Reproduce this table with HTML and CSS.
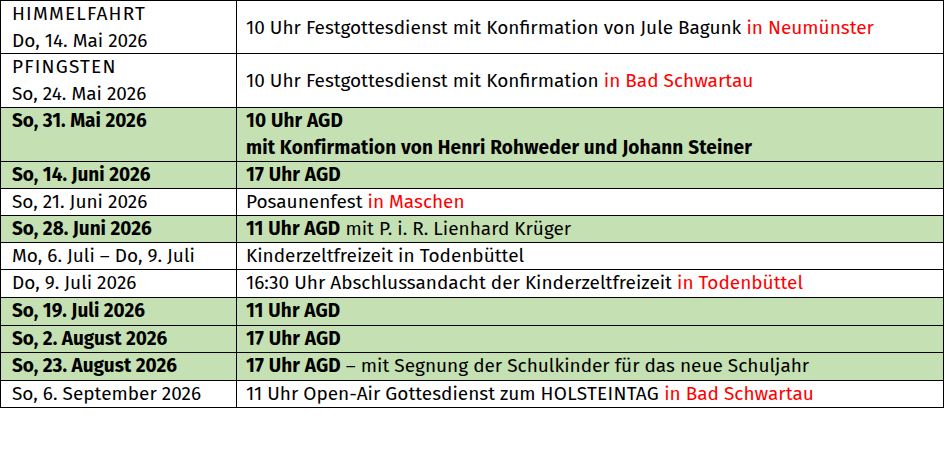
FILE: index.html
```html
<!DOCTYPE html>
<html lang="de">
<head>
<meta charset="utf-8">
<title>Termine</title>
<link rel="stylesheet" href="styles.css">
</head>
<body>
<div class="table">
  <div class="row h53">
    <div class="cell date"><span class="caps">HIMMELFAHRT</span><br>Do, 14. Mai 2026</div>
    <div class="cell event mid">10 Uhr Festgottesdienst mit Konfirmation von Jule Bagunk <span class="red">in Neumünster</span></div>
  </div>
  <div class="row h54">
    <div class="cell date"><span class="caps">PFINGSTEN</span><br>So, 24. Mai 2026</div>
    <div class="cell event mid">10 Uhr Festgottesdienst mit Konfirmation <span class="red">in Bad Schwartau</span></div>
  </div>
  <div class="row h54 green">
    <div class="cell date b">So, 31. Mai 2026</div>
    <div class="cell event b">10 Uhr AGD<br>mit Konfirmation von Henri Rohweder und Johann Steiner</div>
  </div>
  <div class="row h27 green">
    <div class="cell date b">So, 14. Juni 2026</div>
    <div class="cell event b">17 Uhr AGD</div>
  </div>
  <div class="row h27">
    <div class="cell date">So, 21. Juni 2026</div>
    <div class="cell event">Posaunenfest <span class="red">in Maschen</span></div>
  </div>
  <div class="row h27 green">
    <div class="cell date b">So, 28. Juni 2026</div>
    <div class="cell event"><span class="b">11 Uhr AGD</span> mit P. i. R. Lienhard Krüger</div>
  </div>
  <div class="row h27">
    <div class="cell date">Mo, 6. Juli – Do, 9. Juli</div>
    <div class="cell event">Kinderzeltfreizeit in Todenbüttel</div>
  </div>
  <div class="row h28">
    <div class="cell date">Do, 9. Juli 2026</div>
    <div class="cell event">16:30 Uhr Abschlussandacht der Kinderzeltfreizeit <span class="red">in Todenbüttel</span></div>
  </div>
  <div class="row h28 green">
    <div class="cell date b">So, 19. Juli 2026</div>
    <div class="cell event b">11 Uhr AGD</div>
  </div>
  <div class="row h27 green">
    <div class="cell date b">So, 2. August 2026</div>
    <div class="cell event b">17 Uhr AGD</div>
  </div>
  <div class="row h28 green">
    <div class="cell date b">So, 23. August 2026</div>
    <div class="cell event"><span class="b">17 Uhr AGD</span> – mit Segnung der Schulkinder für das neue Schuljahr</div>
  </div>
  <div class="row h27">
    <div class="cell date">So, 6. September 2026</div>
    <div class="cell event">11 Uhr Open-Air Gottesdienst zum <span class="caps-sm">HOLSTEINTAG</span> <span class="red">in Bad Schwartau</span></div>
  </div>
</div>
</body>
</html>
```
FILE: styles.css
```css
html, body {
  margin: 0;
  padding: 0;
  background: #ffffff;
}
body {
  font-family: "Fira Sans", "Open Sans", sans-serif;
  font-size: 19px;
  line-height: 26.7px;
  color: #000000;
}
.table {
  width: 944px;
  box-sizing: border-box;
  border-top: 1px solid #000;
  border-left: 1px solid #000;
}
.row {
  display: grid;
  grid-template-columns: 236px 707px;
}
.h27 { height: 27px; }
.h28 { height: 28px; }
.h53 { height: 53px; }
.h54 { height: 54px; }
.green { background: #c5e0b3; }
.cell {
  box-sizing: border-box;
  border-right: 1px solid #000;
  border-bottom: 1px solid #000;
  white-space: nowrap;
  overflow: hidden;
}
.date { padding-left: 11px; }
.event { padding-left: 9px; }
.mid { padding-top: 14px; }
.b { font-weight: 700; }
.event.b, .event .b { letter-spacing: 0.15px; }
.red { color: #ff0000; }
.caps { letter-spacing: 1.2px; }
.caps-sm { letter-spacing: 0.3px; }
```
